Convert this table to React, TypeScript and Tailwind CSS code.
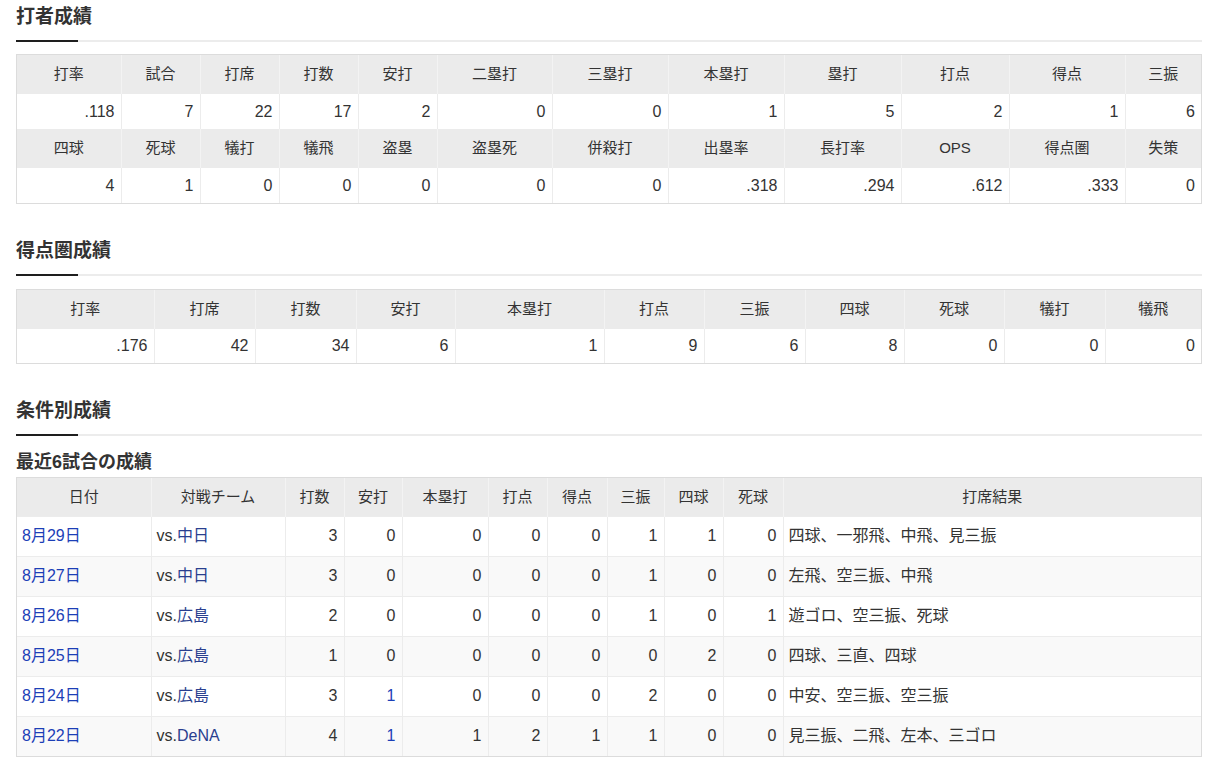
import React from "react";

const FONT = "font-['Liberation_Sans','Noto_Sans_CJK_JP',sans-serif]";

function SectionTitle({ title, className }: { title: string; className?: string }) {
  return (
    <div className={className}>
      <h2 className="text-[19px] font-bold leading-[26px] text-[#333]">{title}</h2>
      <div className="mt-[10px] flex h-[2px]">
        <div className="w-[62px] bg-[#1e1e1e]" />
        <div className="flex-1 bg-[#ececec]" />
      </div>
    </div>
  );
}

function StatTable({
  widths,
  rows,
  className,
  dataH,
}: {
  widths: number[];
  rows: { head: string[]; vals: string[] }[];
  className?: string;
  dataH: string;
}) {
  return (
    <div className={"border border-[#dcdcdc] " + (className ?? "")}>
      <table className="w-full table-fixed border-collapse text-[16px]">
        <colgroup>
          {widths.map((w, i) => (
            <col key={i} style={{ width: w }} />
          ))}
        </colgroup>
        <tbody>
          {rows.map((r, ri) => (
            <React.Fragment key={ri}>
              <tr className="h-[39px] bg-[#ebebeb]">
                {r.head.map((h, i) => (
                  <th
                    key={i}
                    className={
                      "p-0 text-center text-[15px] font-normal text-[#333] " +
                      (i > 0 ? "border-l border-[#f3f3f3]" : "")
                    }
                  >
                    {h}
                  </th>
                ))}
              </tr>
              <tr className={dataH + " bg-white"}>
                {r.vals.map((v, i) => (
                  <td
                    key={i}
                    className={
                      "px-[6px] text-right text-[#333] " +
                      (i > 0 ? "border-l border-[#ececec]" : "")
                    }
                  >
                    {v}
                  </td>
                ))}
              </tr>
            </React.Fragment>
          ))}
        </tbody>
      </table>
    </div>
  );
}

const recentWidths = [134, 134, 59, 58, 86, 59, 60, 57, 59, 60, 418];
const recentHead = ["日付", "対戦チーム", "打数", "安打", "本塁打", "打点", "得点", "三振", "四球", "死球", "打席結果"];
const recentRows: { date: string; team: string; nums: string[]; result: string }[] = [
  { date: "8月29日", team: "中日", nums: ["3", "0", "0", "0", "0", "1", "1", "0"], result: "四球、一邪飛、中飛、見三振" },
  { date: "8月27日", team: "中日", nums: ["3", "0", "0", "0", "0", "1", "0", "0"], result: "左飛、空三振、中飛" },
  { date: "8月26日", team: "広島", nums: ["2", "0", "0", "0", "0", "1", "0", "1"], result: "遊ゴロ、空三振、死球" },
  { date: "8月25日", team: "広島", nums: ["1", "0", "0", "0", "0", "0", "2", "0"], result: "四球、三直、四球" },
  { date: "8月24日", team: "広島", nums: ["3", "1", "0", "0", "0", "2", "0", "0"], result: "中安、空三振、空三振" },
  { date: "8月22日", team: "DeNA", nums: ["4", "1", "1", "2", "1", "1", "0", "0"], result: "見三振、二飛、左本、三ゴロ" },
];

export default function App() {
  return (
    <div className={"min-h-[768px] bg-white pl-4 pr-[23px] pt-[4px] text-[#333] " + FONT}>
      <SectionTitle title="打者成績" />
      <StatTable
        className="mt-[12px]"
        dataH="h-[35px]"
        widths={[104, 79, 79, 79, 79, 115, 116, 116, 117, 108, 116, 76]}
        rows={[
          {
            head: ["打率", "試合", "打席", "打数", "安打", "二塁打", "三塁打", "本塁打", "塁打", "打点", "得点", "三振"],
            vals: [".118", "7", "22", "17", "2", "0", "0", "1", "5", "2", "1", "6"],
          },
          {
            head: ["四球", "死球", "犠打", "犠飛", "盗塁", "盗塁死", "併殺打", "出塁率", "長打率", "OPS", "得点圏", "失策"],
            vals: ["4", "1", "0", "0", "0", "0", "0", ".318", ".294", ".612", ".333", "0"],
          },
        ]}
      />

      <SectionTitle title="得点圏成績" className="mt-[34px]" />
      <StatTable
        className="mt-[13px]"
        dataH="h-[34px]"
        widths={[137, 101, 101, 99, 149, 100, 101, 99, 100, 101, 96]}
        rows={[
          {
            head: ["打率", "打席", "打数", "安打", "本塁打", "打点", "三振", "四球", "死球", "犠打", "犠飛"],
            vals: [".176", "42", "34", "6", "1", "9", "6", "8", "0", "0", "0"],
          },
        ]}
      />

      <SectionTitle title="条件別成績" className="mt-[34px]" />
      <h3 className="mt-[14px] text-[18px] font-bold leading-[24px] text-[#333]">最近6試合の成績</h3>
      <div className="mt-[3px] border border-[#dcdcdc]">
        <table className="w-full table-fixed border-collapse text-[16px]">
          <colgroup>
            {recentWidths.map((w, i) => (
              <col key={i} style={{ width: w }} />
            ))}
          </colgroup>
          <thead>
            <tr className="h-[38px] bg-[#ebebeb]">
              {recentHead.map((h, i) => (
                <th
                  key={i}
                  className={
                    "p-0 text-center text-[15px] font-normal text-[#333] " +
                    (i > 0 ? "border-l border-[#f3f3f3]" : "")
                  }
                >
                  {h}
                </th>
              ))}
            </tr>
          </thead>
          <tbody>
            {recentRows.map((r, ri) => (
              <tr
                key={ri}
                className={"h-[40px] border-t border-[#ececec] " + (ri % 2 === 1 ? "bg-[#f9f9f9]" : "bg-white")}
              >
                <td className="px-[5px] text-left">
                  <a className="text-[#1c3fb7]">{r.date}</a>
                </td>
                <td className="border-l border-[#ececec] px-[5px] text-left">
                  <span className="text-[#333]">vs.</span>
                  <a className="text-[#2a3f8f]">{r.team}</a>
                </td>
                {r.nums.map((n, i) => (
                  <td key={i} className="border-l border-[#ececec] px-[6px] text-right">
                    {i === 1 && n !== "0" ? <a className="text-[#1c3fb7]">{n}</a> : n}
                  </td>
                ))}
                <td className="border-l border-[#ececec] px-[5px] text-left">{r.result}</td>
              </tr>
            ))}
          </tbody>
        </table>
      </div>
    </div>
  );
}
